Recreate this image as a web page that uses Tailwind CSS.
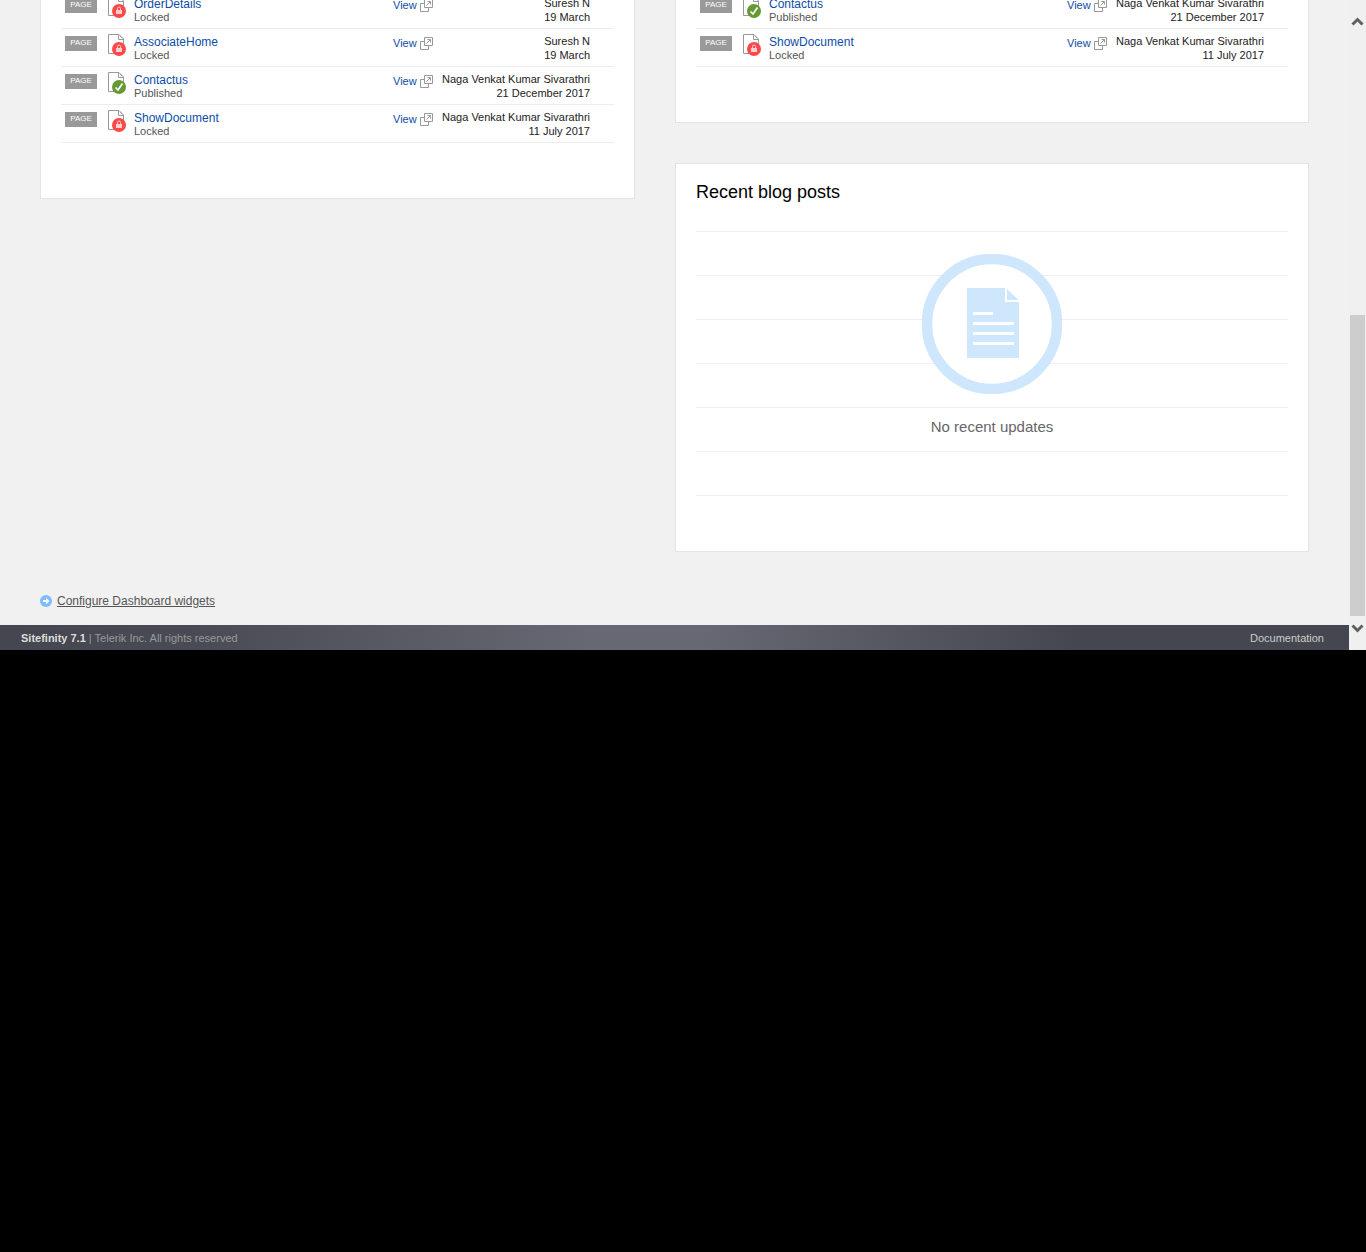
<!DOCTYPE html>
<html lang="en">
<head>
<meta charset="utf-8">
<title>Dashboard</title>
<script src="https://cdn.jsdelivr.net/npm/@tailwindcss/browser@4"></script>
</head>
<body class="bg-black font-['Liberation_Sans',Arial,sans-serif] text-[11px] leading-[14px] text-[#222]">
<svg class="hidden" aria-hidden="true">
  <symbol id="page" viewBox="0 0 18 22">
    <path d="M.5.5H11L15.500 5V19.500H.5Z" fill="#fff" stroke="#999"/>
    <path d="M10.500 .5V5.500H15.500" fill="none" stroke="#999"/>
    <path d="M12 2L14 4" stroke="#999" stroke-width=".8"/>
  </symbol>
  <symbol id="locked" viewBox="0 0 18 22">
    <use href="#page" width="18" height="22"/>
    <circle cx="11" cy="15" r="7" fill="#ff4848"/>
    <path d="M9.500 14V12.500a1.500 1.500 0 0 1 3 0V14" fill="none" stroke="#ffd0d0"/>
    <rect x="8" y="14" width="6" height="4" fill="#ffd0d0"/>
  </symbol>
  <symbol id="published" viewBox="0 0 18 22">
    <use href="#page" width="18" height="22"/>
    <circle cx="11" cy="15" r="7" fill="#669933"/>
    <path d="M7.500 15.500L10 18L14.500 11.500" fill="none" stroke="#fff" stroke-width="1.700"/>
  </symbol>
  <symbol id="open" viewBox="0 0 13 13">
    <path d="M4.500 .5H12.500V8.500H4.500ZM4.500 4.500H.5V12.500H8.500V8.500" fill="none" stroke="#999"/>
    <path d="M6.500 6.500L10 3M7.500 2.500H10.500V5.500" fill="none" stroke="#999"/>
  </symbol>
</svg>

<div class="flex h-[650px] overflow-hidden bg-[#f1f1f1]">
  <div class="flex min-w-0 flex-1 flex-col">
    <main class="-mt-[10px] flex-1 px-10">
      <div class="grid grid-cols-[595fr_634fr] items-start gap-10">
        <section class="border border-[#e4e4e4] bg-white px-5 pb-[55px]">
          <table class="w-full table-fixed border-separate border-spacing-0 [&_td]:h-[38px] [&_td]:border-b [&_td]:border-[#ececec] [&_td]:p-0 [&_td]:align-top">
            <colgroup><col class="w-[47px]"><col class="w-[26px]"><col><col class="w-[40px]"><col class="w-[181px]"></colgroup>
            <tbody>
              <tr>
                <td><span class="ml-1 mt-[7px] block h-[15px] w-8 bg-[#999] text-center text-[8px] leading-[14px] text-white">PAGE</span></td>
                <td><svg class="mt-[5px] h-[22px] w-[18px]"><use href="#locked"/></svg></td>
                <td><div class="pt-[6px]"><a href="#" class="block text-[12px] text-[#0d4da8]">OrderDetails</a><span class="block leading-[12px] text-[#555]">Locked</span></div></td>
                <td><a href="#" class="flex justify-between pt-[7px] text-[#0d4da8]">View<svg class="mt-px h-[13px] w-[13px]"><use href="#open"/></svg></a></td>
                <td class="text-right"><div class="pr-6 pt-[5px]">Suresh N<br>19 March</div></td>
              </tr>
              <tr>
                <td><span class="ml-1 mt-[7px] block h-[15px] w-8 bg-[#999] text-center text-[8px] leading-[14px] text-white">PAGE</span></td>
                <td><svg class="mt-[5px] h-[22px] w-[18px]"><use href="#locked"/></svg></td>
                <td><div class="pt-[6px]"><a href="#" class="block text-[12px] text-[#0d4da8]">AssociateHome</a><span class="block leading-[12px] text-[#555]">Locked</span></div></td>
                <td><a href="#" class="flex justify-between pt-[7px] text-[#0d4da8]">View<svg class="mt-px h-[13px] w-[13px]"><use href="#open"/></svg></a></td>
                <td class="text-right"><div class="pr-6 pt-[5px]">Suresh N<br>19 March</div></td>
              </tr>
              <tr>
                <td><span class="ml-1 mt-[7px] block h-[15px] w-8 bg-[#999] text-center text-[8px] leading-[14px] text-white">PAGE</span></td>
                <td><svg class="mt-[5px] h-[22px] w-[18px]"><use href="#published"/></svg></td>
                <td><div class="pt-[6px]"><a href="#" class="block text-[12px] text-[#0d4da8]">Contactus</a><span class="block leading-[12px] text-[#555]">Published</span></div></td>
                <td><a href="#" class="flex justify-between pt-[7px] text-[#0d4da8]">View<svg class="mt-px h-[13px] w-[13px]"><use href="#open"/></svg></a></td>
                <td class="text-right"><div class="pr-6 pt-[5px]">Naga Venkat Kumar Sivarathri<br>21 December 2017</div></td>
              </tr>
              <tr>
                <td><span class="ml-1 mt-[7px] block h-[15px] w-8 bg-[#999] text-center text-[8px] leading-[14px] text-white">PAGE</span></td>
                <td><svg class="mt-[5px] h-[22px] w-[18px]"><use href="#locked"/></svg></td>
                <td><div class="pt-[6px]"><a href="#" class="block text-[12px] text-[#0d4da8]">ShowDocument</a><span class="block leading-[12px] text-[#555]">Locked</span></div></td>
                <td><a href="#" class="flex justify-between pt-[7px] text-[#0d4da8]">View<svg class="mt-px h-[13px] w-[13px]"><use href="#open"/></svg></a></td>
                <td class="text-right"><div class="pr-6 pt-[5px]">Naga Venkat Kumar Sivarathri<br>11 July 2017</div></td>
              </tr>
            </tbody>
          </table>
        </section>

        <div class="flex flex-col gap-10">
          <section class="border border-[#e4e4e4] bg-white px-5 pb-[55px]">
            <table class="w-full table-fixed border-separate border-spacing-0 [&_td]:h-[38px] [&_td]:border-b [&_td]:border-[#ececec] [&_td]:p-0 [&_td]:align-top">
              <colgroup><col class="w-[47px]"><col class="w-[26px]"><col><col class="w-[40px]"><col class="w-[181px]"></colgroup>
              <tbody>
                <tr>
                  <td><span class="ml-1 mt-[7px] block h-[15px] w-8 bg-[#999] text-center text-[8px] leading-[14px] text-white">PAGE</span></td>
                  <td><svg class="mt-[5px] h-[22px] w-[18px]"><use href="#published"/></svg></td>
                  <td><div class="pt-[6px]"><a href="#" class="block text-[12px] text-[#0d4da8]">Contactus</a><span class="block leading-[12px] text-[#555]">Published</span></div></td>
                  <td><a href="#" class="flex justify-between pt-[7px] text-[#0d4da8]">View<svg class="mt-px h-[13px] w-[13px]"><use href="#open"/></svg></a></td>
                  <td class="text-right"><div class="pr-6 pt-[5px]">Naga Venkat Kumar Sivarathri<br>21 December 2017</div></td>
                </tr>
                <tr>
                  <td><span class="ml-1 mt-[7px] block h-[15px] w-8 bg-[#999] text-center text-[8px] leading-[14px] text-white">PAGE</span></td>
                  <td><svg class="mt-[5px] h-[22px] w-[18px]"><use href="#locked"/></svg></td>
                  <td><div class="pt-[6px]"><a href="#" class="block text-[12px] text-[#0d4da8]">ShowDocument</a><span class="block leading-[12px] text-[#555]">Locked</span></div></td>
                  <td><a href="#" class="flex justify-between pt-[7px] text-[#0d4da8]">View<svg class="mt-px h-[13px] w-[13px]"><use href="#open"/></svg></a></td>
                  <td class="text-right"><div class="pr-6 pt-[5px]">Naga Venkat Kumar Sivarathri<br>11 July 2017</div></td>
                </tr>
              </tbody>
            </table>
          </section>

          <section class="border border-[#e4e4e4] bg-white px-5 pb-[55px] pt-4">
            <h2 class="text-[18px] leading-6 text-black">Recent blog posts</h2>
            <div class="mt-[27px] grid border-t border-[#f0f0f0]">
              <div class="col-start-1 row-start-1">
                <div class="h-11 border-b border-[#f0f0f0]"></div>
                <div class="h-11 border-b border-[#f0f0f0]"></div>
                <div class="h-11 border-b border-[#f0f0f0]"></div>
                <div class="h-11 border-b border-[#f0f0f0]"></div>
                <div class="h-11 border-b border-[#f0f0f0]"></div>
                <div class="h-11 border-b border-[#f0f0f0]"></div>
              </div>
              <div class="z-10 col-start-1 row-start-1 flex flex-col items-center pt-[22px]">
                <svg class="h-[140px] w-[140px]" viewBox="0 0 140 140">
                  <circle cx="70" cy="70" r="65" fill="#fff" stroke="#cfe7fc" stroke-width="10.500"/>
                  <path d="M45 34H83V48H97V104H45Z" fill="#cfe7fc"/>
                  <path d="M85 35V46H96.500Z" fill="#cfe7fc"/>
                  <path d="M51 58H71V61H51ZM51 68H92V71H51ZM51 78H92V81H51ZM51 88H92V91H51Z" fill="#fff"/>
                </svg>
                <p class="mt-6 text-[15px] leading-[18px] text-[#666]">No recent updates</p>
              </div>
            </div>
          </section>
        </div>
      </div>
      <a href="#" class="mt-[42px] inline-flex items-center gap-[5px] text-[12px] text-[#555] underline">
        <svg class="h-3 w-3" viewBox="0 0 12 12"><circle cx="6" cy="6" r="6" fill="#7dbdff"/><path d="M3 5H6V2.800L9.500 6L6 9.200V7H3Z" fill="#fff"/></svg>
        Configure Dashboard widgets
      </a>
    </main>
    <footer class="flex h-[25px] items-center justify-between bg-linear-[90deg,#44474f_0%,#484b53_14%,#666973_44%,#666973_52%,#44474f_80%,#44474f_100%] pl-[21px] pr-[25px] text-[#999]">
      <p><strong class="text-[#ddd]">Sitefinity 7.1</strong> | Telerik Inc. All rights reserved</p>
      <a href="#" class="text-[#ccc]">Documentation</a>
    </footer>
  </div>
  <div class="flex w-[17px] flex-col items-center justify-between bg-[#f0f0f0] pb-4 pt-4" aria-hidden="true">
    <svg class="h-[10px] w-[13px]" viewBox="0 0 13 10"><path d="M1.500 8.500L6.500 3.500L11.500 8.500" fill="none" stroke="#606060" stroke-width="3"/></svg>
    <div class="mt-auto mb-2 h-[301px] w-[15px] bg-[#cdcdcd]"></div>
    <svg class="h-[10px] w-[13px]" viewBox="0 0 13 10"><path d="M1.500 1.500L6.500 6.500L11.500 1.500" fill="none" stroke="#606060" stroke-width="3"/></svg>
  </div>
</div>
</body>
</html>
